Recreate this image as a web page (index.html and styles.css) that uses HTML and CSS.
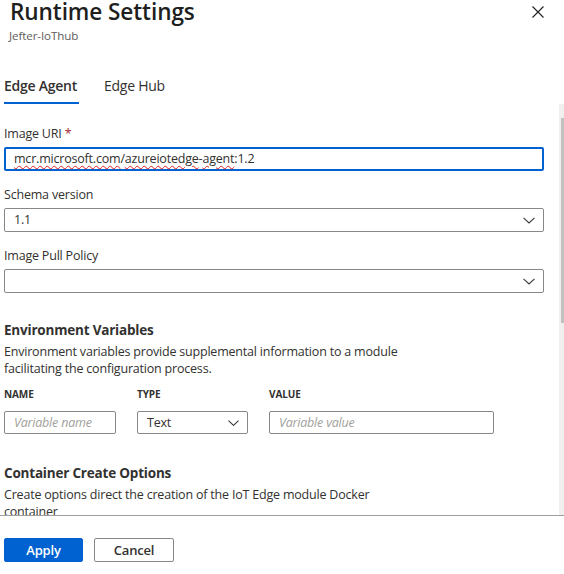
FILE: index.html
```html
<!DOCTYPE html>
<html lang="en">
<head>
<meta charset="utf-8">
<title>Runtime Settings</title>
<link rel="stylesheet" href="styles.css">
</head>
<body>
<div class="panel">
  <header class="head">
    <div class="titles">
      <h1 class="title">Runtime Settings</h1>
      <div class="subtitle">Jefter-IoThub</div>
    </div>
    <button class="close" aria-label="Close">
      <svg width="12" height="12" viewBox="0 0 12 12"><path d="M0.5 0.5 L11.5 11.5 M11.5 0.5 L0.5 11.5" stroke="#201f1e" stroke-width="1.1" fill="none"/></svg>
    </button>
  </header>

  <nav class="tabs">
    <a class="tab active">Edge Agent</a>
    <a class="tab">Edge Hub</a>
  </nav>

  <main class="scroll">
    <div class="field">
      <label class="label">Image URI <span class="req">*</span></label>
      <div class="input focused"><span class="value"><span class="spell">mcr.microsoft.com</span>/<span class="spell">azureiotedge</span>-<span class="spell">agent</span>:1.2</span></div>
    </div>
    <div class="field">
      <label class="label">Schema version</label>
      <div class="input select"><span class="value">1.1</span>
        <svg class="chev" width="12" height="7" viewBox="0 0 12 7"><path d="M0.5 0.8 L6 6 L11.5 0.8" stroke="#3b3a39" stroke-width="1.1" fill="none"/></svg>
      </div>
    </div>
    <div class="field">
      <label class="label">Image Pull Policy</label>
      <div class="input select"><span class="value"></span>
        <svg class="chev" width="12" height="7" viewBox="0 0 12 7"><path d="M0.5 0.8 L6 6 L11.5 0.8" stroke="#3b3a39" stroke-width="1.1" fill="none"/></svg>
      </div>
    </div>

    <section class="section">
      <h2 class="sec-title">Environment Variables</h2>
      <p class="sec-desc">Environment variables provide supplemental information to a module facilitating the configuration process.</p>
      <div class="env-grid">
        <div class="col-head">Name</div>
        <div class="col-head">Type</div>
        <div class="col-head">Value</div>
        <div class="input small placeholder"><span class="value">Variable name</span></div>
        <div class="input small select"><span class="value">Text</span>
          <svg class="chev" width="11" height="6" viewBox="0 0 11 6"><path d="M0.5 0.6 L5.5 5.4 L10.5 0.6" stroke="#3b3a39" stroke-width="1.1" fill="none"/></svg>
        </div>
        <div class="input small placeholder"><span class="value">Variable value</span></div>
      </div>
    </section>

    <section class="section second">
      <h2 class="sec-title">Container Create Options</h2>
      <p class="sec-desc">Create options direct the creation of the IoT Edge module Docker container</p>
    </section>

    <div class="scrollbar" aria-hidden="true">
      <div class="sb-arrow"></div>
      <div class="sb-thumb"></div>
    </div>
  </main>

  <footer class="foot">
    <button class="btn primary">Apply</button>
    <button class="btn">Cancel</button>
  </footer>
</div>
</body>
</html>
```

FILE: styles.css
```css
* { box-sizing: border-box; }
html, body { margin: 0; padding: 0; background: #fff; }
body {
  font-family: "Open Sans", "Noto Sans", sans-serif;
  color: #323130;
  font-size: 12.5px;
  letter-spacing: -0.2px;
}
.panel {
  width: 564px;
  height: 574px;
  display: flex;
  flex-direction: column;
  overflow: hidden;
}
.head {
  display: flex;
  justify-content: space-between;
  align-items: flex-start;
  padding: 0 20px 0 9px;
  height: 66px;
}
.title {
  margin: 0 0 0 1px;
  font-size: 22.6px;
  font-weight: 600;
  line-height: 24px;
  color: #201f1e;
  letter-spacing: -0.1px;
}
.subtitle {
  font-size: 11.6px;
  line-height: 16px;
  color: #605e5c;
  margin-top: 4px;
  letter-spacing: -0.1px;
}
.close {
  border: 0;
  background: none;
  padding: 0;
  margin-top: 6px;
  width: 12px;
  height: 12px;
  display: flex;
}
.tabs {
  display: flex;
  gap: 27px;
  padding: 0 4px;
  height: 38px;
}
.tab {
  position: relative;
  font-size: 14px;
  line-height: 39px;
  color: #323130;
  padding: 0;
  letter-spacing: -0.25px;
}
.tab.active {
  font-weight: 600;
}
.tab.active::after {
  content: "";
  position: absolute;
  left: 0;
  right: -2px;
  bottom: 0;
  height: 2px;
  background: #0062d1;
}
.scroll {
  position: relative;
  flex: 1;
  overflow: hidden;
  padding: 21px 20px 0 4px;
}
.scrollbar {
  position: absolute;
  top: 0;
  right: 0;
  bottom: 0;
  width: 5px;
  background: #f0f0f0;
}
.sb-arrow { height: 14px; }
.sb-thumb {
  margin-left: 2px;
  height: 205px;
  background: #c1c1c1;
}
.field { margin-bottom: 15px; }
.label {
  display: block;
  line-height: 18px;
  margin-bottom: 4px;
}
.req { color: #a4262c; }
.input {
  height: 24px;
  border: 1px solid #8a8886;
  border-radius: 2px;
  padding: 0 9px;
  display: flex;
  align-items: center;
  justify-content: space-between;
  white-space: nowrap;
  color: #323130;
}
.value { line-height: 22px; }
.input.focused {
  border: 2px solid #0062d1;
  padding: 0 8px;
}
.spell {
  text-decoration: underline wavy #e0201d;
  text-decoration-thickness: 1px;
  text-underline-offset: 2px;
}
.chev { margin-right: -1px; flex: none; }
.section { margin-top: 27px; }
.section.second { margin-top: 29px; }
.sec-title {
  margin: 0;
  font-size: 13.5px;
  font-weight: 700;
  line-height: 20px;
  color: #323130;
  letter-spacing: -0.2px;
}
.sec-desc {
  margin: 3px 0 0;
  line-height: 17px;
  width: 410px;
}
.env-grid {
  display: grid;
  grid-template-columns: 112px 111px 225px;
  column-gap: 21px;
  margin-top: 10px;
}
.col-head {
  font-size: 10px;
  font-weight: 700;
  text-transform: uppercase;
  line-height: 14px;
  margin-bottom: 10px;
  color: #323130;
  letter-spacing: -0.1px;
}
.input.small { height: 23px; }
.input.placeholder {
  color: #a19f9d;
  font-style: italic;
}
.foot {
  border-top: 1px solid #a19f9d;
  height: 59px;
  padding: 22px 4px 0;
  display: flex;
  gap: 11px;
  align-items: flex-start;
}
.btn {
  height: 24px;
  width: 80px;
  border: 1px solid #8a8886;
  border-radius: 2px;
  background: #fff;
  font-family: inherit;
  font-size: 13px;
  font-weight: 600;
  color: #323130;
  padding: 0;
  letter-spacing: -0.2px;
}
.btn.primary {
  width: 79px;
  background: #0062d1;
  border-color: #0062d1;
  color: #fff;
}
```
